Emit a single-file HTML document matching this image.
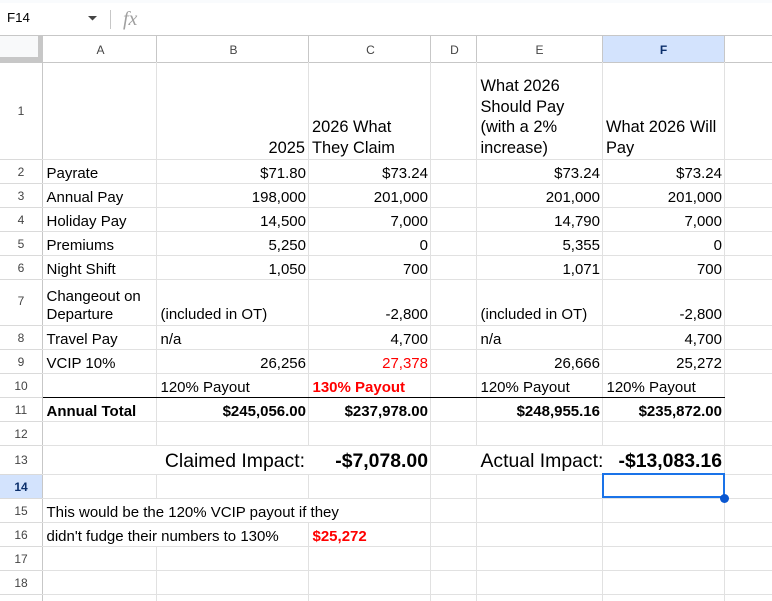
<!DOCTYPE html>
<html><head><meta charset="utf-8"><style>
html,body{margin:0;padding:0;background:#fff}
#p{position:relative;width:772px;height:601px;overflow:hidden;background:#fff;font-family:"Liberation Sans",Arial,sans-serif;color:#000}
#p div{position:absolute}
.h{left:42px;width:730px;height:1px;background:#e1e1e1}
.rh{left:0;width:42px;height:1px;background:#dadada}
.v{width:1px;top:62px;height:539px;background:#e1e1e1}
.vh{width:1px;top:36px;height:26px;background:#c7c7c7}
.w{width:1px;background:#fff}
.t,.r{font-size:15px;line-height:20px;white-space:nowrap;margin-top:1px}
.r{text-align:right}
.b{font-weight:bold}
.red{color:#f00}
.hd{font-size:16.4px;line-height:20px;white-space:nowrap}
.n{left:0;width:42px;text-align:center;font-size:12px;line-height:16px;color:#444}
.c{top:42px;text-align:center;font-size:12px;line-height:16px;color:#444}
.big{font-size:19.4px;line-height:24px;white-space:nowrap}
</style></head><body><div id="p">
<div style="left:0;top:0;width:772px;height:3px;background:#f9fbfd"></div>
<div style="left:7px;top:9px;font-size:13.33px;line-height:18px;color:#000">F14</div>
<svg style="position:absolute;left:86px;top:14px" width="12" height="8"><path d="M2 2h9l-4.5 4.5z" fill="#444"/></svg>
<div style="left:110px;top:10px;width:1px;height:19px;background:#c7c7c7"></div>
<div style="left:123px;top:8px;font-family:'Liberation Serif',serif;font-style:italic;font-size:20px;line-height:22px;color:#a0a0a0">fx</div>
<div style="left:0;top:35px;width:772px;height:1px;background:#c7c7c7"></div>
<div style="left:0;top:36px;width:38px;height:21px;background:#f8f9fa"></div>
<div style="left:38px;top:36px;width:4px;height:26px;background:#c7c7c7"></div>
<div style="left:0;top:57px;width:42px;height:5px;background:#c7c7c7"></div>
<div style="left:603px;top:36px;width:121px;height:26px;background:#d3e3fd"></div>
<div style="left:0;top:475px;width:42px;height:23px;background:#d3e3fd"></div>
<div style="left:0;top:62px;width:772px;height:1px;background:#c7c7c7"></div>
<div class="vh" style="left:156px"></div><div class="vh" style="left:308px"></div><div class="vh" style="left:430px"></div><div class="vh" style="left:476px"></div><div class="vh" style="left:602px"></div><div class="vh" style="left:724px"></div>
<div class="v" style="left:156px"></div><div class="v" style="left:308px"></div><div class="v" style="left:430px"></div><div class="v" style="left:476px"></div><div class="v" style="left:602px"></div><div class="v" style="left:724px"></div>
<div class="w" style="left:156px;top:446px;height:28px"></div><div class="w" style="left:308px;top:446px;height:28px"></div><div class="w" style="left:476px;top:446px;height:28px"></div><div class="w" style="left:602px;top:446px;height:27px"></div>
<div class="w" style="left:156px;top:499px;height:23px"></div><div class="w" style="left:308px;top:499px;height:23px"></div><div class="w" style="left:156px;top:523px;height:23px"></div>
<div style="left:42px;top:36px;width:1px;height:565px;background:#c7c7c7"></div>
<div class="h" style="top:159px"></div><div class="h" style="top:183px"></div><div class="h" style="top:207px"></div><div class="h" style="top:231px"></div><div class="h" style="top:255px"></div><div class="h" style="top:279px"></div><div class="h" style="top:325px"></div><div class="h" style="top:349px"></div><div class="h" style="top:373px"></div><div class="h" style="top:421px"></div><div class="h" style="top:445px"></div><div class="h" style="top:474px"></div><div class="h" style="top:498px"></div><div class="h" style="top:522px"></div><div class="h" style="top:546px"></div><div class="h" style="top:570px"></div><div class="h" style="top:594px"></div>
<div class="rh" style="top:159px"></div><div class="rh" style="top:183px"></div><div class="rh" style="top:207px"></div><div class="rh" style="top:231px"></div><div class="rh" style="top:255px"></div><div class="rh" style="top:279px"></div><div class="rh" style="top:325px"></div><div class="rh" style="top:349px"></div><div class="rh" style="top:373px"></div><div class="rh" style="top:397px"></div><div class="rh" style="top:421px"></div><div class="rh" style="top:445px"></div><div class="rh" style="top:474px"></div><div class="rh" style="top:498px"></div><div class="rh" style="top:522px"></div><div class="rh" style="top:546px"></div><div class="rh" style="top:570px"></div><div class="rh" style="top:594px"></div>
<div style="left:43px;top:397px;width:682px;height:1px;background:#000"></div>

<div class="c" style="left:44px;width:113px">A</div>
<div class="c" style="left:158px;width:151px">B</div>
<div class="c" style="left:310px;width:121px">C</div>
<div class="c" style="left:432px;width:45px">D</div>
<div class="c" style="left:477px;width:125px">E</div>
<div class="c b" style="left:603px;width:121px;color:#0b2f6b">F</div>

<div class="n" style="top:103px">1</div><div class="n" style="top:164px">2</div><div class="n" style="top:188px">3</div><div class="n" style="top:212px">4</div><div class="n" style="top:236px">5</div><div class="n" style="top:260px">6</div><div class="n" style="top:293px">7</div><div class="n" style="top:330px">8</div><div class="n" style="top:354px">9</div><div class="n" style="top:378px">10</div><div class="n" style="top:402px">11</div><div class="n" style="top:426px">12</div><div class="n" style="top:452px">13</div><div class="n b" style="top:479px;color:#0b2f6b">14</div><div class="n" style="top:503px">15</div><div class="n" style="top:527px">16</div><div class="n" style="top:551px">17</div><div class="n" style="top:575px">18</div>

<div class="hd" style="right:467px;top:138px">2025</div>
<div class="hd" style="left:312px;top:117px">2026 What</div><div class="hd" style="left:312px;top:138px">They Claim</div>
<div class="hd" style="left:480.5px;top:76px">What 2026</div><div class="hd" style="left:480.5px;top:97px">Should Pay</div><div class="hd" style="left:480.5px;top:117px">(with a 2%</div><div class="hd" style="left:480.5px;top:138px">increase)</div>
<div class="hd" style="left:606px;top:117px">What 2026 Will</div><div class="hd" style="left:606px;top:138px">Pay</div>

<div class="t" style="left:46.5px;top:163px">Payrate</div><div class="r" style="right:466px;top:163px">$71.80</div><div class="r" style="right:344px;top:163px">$73.24</div><div class="r" style="right:172px;top:163px">$73.24</div><div class="r" style="right:50px;top:163px">$73.24</div>
<div class="t" style="left:46.5px;top:187px">Annual Pay</div><div class="r" style="right:466px;top:187px">198,000</div><div class="r" style="right:344px;top:187px">201,000</div><div class="r" style="right:172px;top:187px">201,000</div><div class="r" style="right:50px;top:187px">201,000</div>
<div class="t" style="left:46.5px;top:211px">Holiday Pay</div><div class="r" style="right:466px;top:211px">14,500</div><div class="r" style="right:344px;top:211px">7,000</div><div class="r" style="right:172px;top:211px">14,790</div><div class="r" style="right:50px;top:211px">7,000</div>
<div class="t" style="left:46.5px;top:235px">Premiums</div><div class="r" style="right:466px;top:235px">5,250</div><div class="r" style="right:344px;top:235px">0</div><div class="r" style="right:172px;top:235px">5,355</div><div class="r" style="right:50px;top:235px">0</div>
<div class="t" style="left:46.5px;top:259px">Night Shift</div><div class="r" style="right:466px;top:259px">1,050</div><div class="r" style="right:344px;top:259px">700</div><div class="r" style="right:172px;top:259px">1,071</div><div class="r" style="right:50px;top:259px">700</div>
<div class="t" style="left:46.5px;top:286px">Changeout on</div><div class="t" style="left:46.5px;top:304px">Departure</div><div class="t" style="left:160.5px;top:304px">(included in OT)</div><div class="r" style="right:344px;top:304px">-2,800</div><div class="t" style="left:480.5px;top:304px">(included in OT)</div><div class="r" style="right:50px;top:304px">-2,800</div>
<div class="t" style="left:46.5px;top:329px">Travel Pay</div><div class="t" style="left:160.5px;top:329px">n/a</div><div class="r" style="right:344px;top:329px">4,700</div><div class="t" style="left:480.5px;top:329px">n/a</div><div class="r" style="right:50px;top:329px">4,700</div>
<div class="t" style="left:46.5px;top:353px">VCIP 10%</div><div class="r" style="right:466px;top:353px">26,256</div><div class="r red" style="right:344px;top:353px">27,378</div><div class="r" style="right:172px;top:353px">26,666</div><div class="r" style="right:50px;top:353px">25,272</div>
<div class="t" style="left:160.5px;top:377px">120% Payout</div><div class="t b red" style="left:312.5px;top:377px">130% Payout</div><div class="t" style="left:480.5px;top:377px">120% Payout</div><div class="t" style="left:606.5px;top:377px">120% Payout</div>
<div class="t b" style="left:46.5px;top:401px">Annual Total</div><div class="r b" style="right:466px;top:401px">$245,056.00</div><div class="r b" style="right:344px;top:401px">$237,978.00</div><div class="r b" style="right:172px;top:401px">$248,955.16</div><div class="r b" style="right:50px;top:401px">$235,872.00</div>
<div class="big" style="right:467px;top:449px">Claimed Impact:</div><div class="big b" style="right:344px;top:449px">-$7,078.00</div><div class="big" style="left:480.5px;top:449px">Actual Impact:</div><div class="big b" style="right:50px;top:449px">-$13,083.16</div>
<div class="t" style="left:46.5px;top:502px">This would be the 120% VCIP payout if they</div>
<div class="t" style="left:46.5px;top:526px">didn't fudge their numbers to 130%</div><div class="t b red" style="left:312.5px;top:526px">$25,272</div>

<div style="left:602px;top:473px;width:119px;height:21px;border:2px solid #1a73e8"></div>
<div style="left:719.5px;top:493.5px;width:9px;height:9px;border-radius:50%;background:#0b57d0"></div>
</div></body></html>
